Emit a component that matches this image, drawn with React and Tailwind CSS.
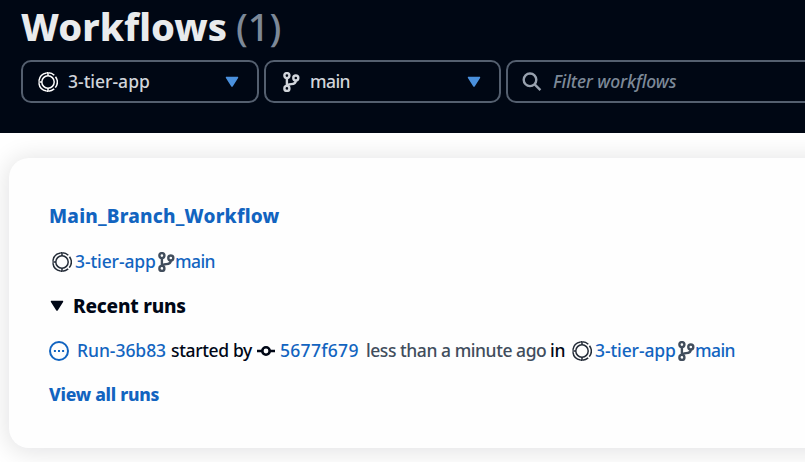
function RepoIcon({ className = "" }) {
  return (
    <svg viewBox="0 0 20 20" className={`h-5 w-5 shrink-0 ${className}`} fill="none" stroke="currentColor" strokeWidth="1.5">
      <circle cx="10" cy="10" r="6.2" />
      <path d="M8.6 .9A9.2 9.2 0 0 0 .9 8.8M.9 11.2a9.2 9.2 0 0 0 7.7 7.9M10.4 19.2a9.2 9.2 0 0 0 5.8-2.3M17.3 15.6a9.2 9.2 0 0 0 .2-10.9M10.4 .8a9.2 9.2 0 0 1 5.9 2.4" />
      <path d="M8.6 .8h1.8M8.6 19.2h1.8M.3 10h3.5M10 1v2.8M10 16.2V19" />
    </svg>
  );
}

function BranchIcon({ className = "" }) {
  return (
    <svg viewBox="0 0 18 20" className={`h-5 w-[18px] shrink-0 ${className}`} fill="none" stroke="currentColor" strokeWidth="2.4">
      <circle cx="4.9" cy="3.6" r="2.5" />
      <circle cx="4.9" cy="16.4" r="2.5" />
      <circle cx="13.8" cy="6" r="2.5" />
      <path d="M4.9 6v8M13.8 8.4c0 3.2-2.4 3.5-4.6 3.7-2.3.2-4 .7-4.3 2.3" />
    </svg>
  );
}

function CommitIcon({ className = "" }) {
  return (
    <svg viewBox="0 0 18 12" className={`h-3 w-[18px] shrink-0 ${className}`} fill="none" stroke="currentColor" strokeWidth="2.6">
      <circle cx="9" cy="6" r="3.7" />
      <path d="M0 6h5.4M12.6 6H18" />
    </svg>
  );
}

function Caret({ className = "" }) {
  return (
    <svg viewBox="0 0 14 12" className={`h-3 w-3.5 shrink-0 ${className}`} fill="currentColor">
      <path d="M1.5.8h11c.6 0 .9.6.6 1.1L7.7 10.4c-.3.6-1.1.6-1.4 0L.9 1.9C.6 1.4.9.8 1.5.8z" />
    </svg>
  );
}

function Header() {
  return (
    <header className="h-[133px] bg-[#000714] pl-[21px]">
      <h1 className="flex h-[60px] items-center whitespace-nowrap pb-[9px] text-[38px] leading-none">
        <span className="w-[215px] font-extrabold tracking-[0.05px] text-[#e9ebed]">Workflows</span>
        <span className="font-medium text-[#7d8998]">(1)</span>
      </h1>
      <div className="flex w-[900px] gap-[5px] text-[#d1d5db]">
        <div className="flex h-[43px] w-[238px] items-center rounded-[10px] border-2 border-[#545f6f] pl-[15px] pr-[18px]">
          <RepoIcon className="text-white" />
          <span className="ml-2.5 flex-1 pb-px font-medium">3-tier-app</span>
          <Caret className="text-[#4a90dd]" />
        </div>
        <div className="flex h-[43px] w-[237px] items-center rounded-[10px] border-2 border-[#545f6f] pl-4 pr-[18px]">
          <BranchIcon />
          <span className="ml-2.5 flex-1 pb-px font-medium tracking-[-0.6px]">main</span>
          <Caret className="text-[#4a90dd]" />
        </div>
        <div className="flex h-[43px] flex-1 items-center rounded-[10px] border-2 border-[#545f6f] pl-3.5">
          <svg viewBox="0 0 20 20" className="h-5 w-5 text-[#98a1ae]" fill="none" stroke="currentColor" strokeWidth="2.4">
            <circle cx="8" cy="7.8" r="6.3" />
            <path d="M12.4 12.2l6 6" />
          </svg>
          <span className="ml-[11px] pb-px font-medium italic tracking-[-0.1px] text-[#7d8998]">Filter workflows</span>
        </div>
      </div>
    </header>
  );
}

export default function App() {
  return (
    <div className="h-[462px] w-[805px] overflow-hidden bg-white font-['Noto_Sans','Open_Sans',sans-serif] text-[17.5px] leading-6 text-[#000716]">
      <Header />
      <main className="h-[329px] overflow-hidden pl-[9px] pt-[25px]">
        <section className="flex h-[290px] w-[900px] flex-col whitespace-nowrap rounded-[20px] bg-[#fefefe] pl-10 pt-[46px] font-medium shadow-[0_2px_24px_3px_rgba(0,7,22,0.11)]">
          <h2 className="h-6 text-[19px] font-extrabold tracking-[0.22px] text-[#1264c0]">Main_Branch_Workflow</h2>
          <div className="mt-[22px] flex h-6 items-center text-[#1264c0]">
            <RepoIcon className="ml-[3px] text-[#232b37]" />
            <span className="ml-[3px] w-[82px] pb-0.5 tracking-[-0.1px]">3-tier-app</span>
            <BranchIcon className="text-[#414d5c]" />
            <span className="pb-0.5 tracking-[-0.6px]">main</span>
          </div>
          <div className="mt-5 flex h-6 items-center text-[19px] font-extrabold">
            <Caret className="ml-px" />
            <span className="ml-[9px] tracking-[-0.2px]">Recent runs</span>
          </div>
          <div className="mt-[21px] flex h-6 items-center">
            <svg viewBox="0 0 20 20" className="h-5 w-5 shrink-0 text-[#1264c0]" fill="none" stroke="currentColor" strokeWidth="2">
              <circle cx="10" cy="10" r="9" />
              <path d="M4.9 10h2M9 10h2M13.1 10h2" strokeWidth="2.2" />
            </svg>
            <span className="ml-2 w-[94px] pb-0.5 tracking-[-0.05px] text-[#1264c0]">Run-36b83</span>
            <span className="w-[86px] pb-0.5 tracking-[-0.35px]">started by</span>
            <CommitIcon />
            <span className="ml-[5px] w-[86px] pb-0.5 tracking-[0.3px] text-[#1264c0]">5677f679</span>
            <span className="w-[184px] pb-0.5 tracking-[-0.45px] text-[#414d5c]">less than a minute ago</span>
            <span className="w-[22px] pb-0.5 tracking-[-0.3px]">in</span>
            <RepoIcon className="text-[#232b37]" />
            <span className="ml-[3px] w-[82px] pb-0.5 tracking-[-0.1px] text-[#1264c0]">3-tier-app</span>
            <BranchIcon className="text-[#414d5c]" />
            <span className="pb-0.5 tracking-[-0.6px] text-[#1264c0]">main</span>
          </div>
          <a className="mt-[19px] h-6 font-extrabold tracking-[-0.25px] text-[#1264c0]">View all runs</a>
        </section>
      </main>
    </div>
  );
}
